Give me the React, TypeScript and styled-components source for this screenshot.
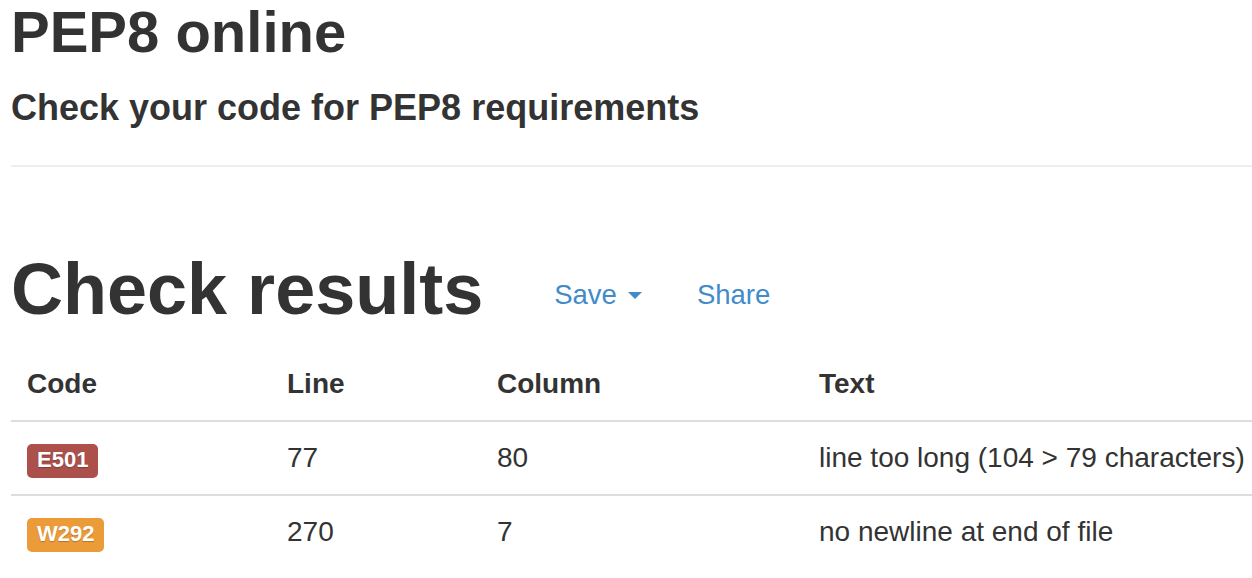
import React from "react";
import styled, { createGlobalStyle } from "styled-components";

const GlobalStyle = createGlobalStyle`
  html, body {
    margin: 0;
    padding: 0;
    background: #fff;
  }
  body {
    font-family: "Liberation Sans", Arial, Helvetica, sans-serif;
    font-size: 28px;
    line-height: 40px;
    color: #333;
  }
`;

const Page = styled.div`
  width: 100%;
  overflow: hidden;
`;

const Content = styled.div`
  width: 1330px;
  padding-left: 11px;
`;

const PageHeader = styled.header`
  padding-bottom: 38px;
  border-bottom: 2px solid #eee;
  margin-bottom: 83px;
`;

const Title = styled.h1`
  margin: 0;
  font-size: 58px;
  line-height: 1.1;
  font-weight: 700;
  color: #333;
`;

const Subtitle = styled.h4`
  margin: 24px 0 0;
  font-size: 36px;
  line-height: 1.1;
  font-weight: 700;
  color: #333;
`;

const ResultsBar = styled.div`
  display: flex;
  align-items: flex-start;
  margin-bottom: 18px;
`;

const ResultsTitle = styled.h1`
  margin: 0;
  font-size: 72px;
  line-height: 1.1;
  font-weight: 700;
  color: #333;
`;

const Actions = styled.nav`
  display: flex;
  align-items: center;
  margin-top: 25px;
  margin-left: 71px;
`;

const ActionLink = styled.a<{ $gap?: number }>`
  display: inline-flex;
  align-items: center;
  color: #428bca;
  text-decoration: none;
  font-size: 27.5px;
  line-height: 40px;
  margin-left: ${(p) => p.$gap ?? 0}px;
  cursor: pointer;
`;

const Caret = styled.span`
  display: inline-block;
  width: 0;
  height: 0;
  margin-left: 11px;
  margin-top: 1px;
  border-top: 7px solid #428bca;
  border-left: 7px solid transparent;
  border-right: 7px solid transparent;
`;

const Table = styled.table`
  width: 100%;
  border-collapse: collapse;
  border-spacing: 0;
`;

const Th = styled.th<{ $w?: number }>`
  text-align: left;
  font-weight: 700;
  padding: 16px;
  line-height: 40px;
  border-bottom: 2px solid #ddd;
  vertical-align: bottom;
  ${(p) => (p.$w ? `width: ${p.$w}px;` : "")}
  box-sizing: border-box;
`;

const Td = styled.td`
  padding: 16px;
  line-height: 40px;
  border-top: 2px solid #ddd;
  vertical-align: top;
  white-space: nowrap;
`;

const Badge = styled.span<{ $tone: "danger" | "warning" }>`
  display: inline-block;
  font-size: 22px;
  font-weight: 700;
  line-height: 1;
  color: #fff;
  padding: 5px 10px 7px;
  border-radius: 5px;
  background: ${(p) => (p.$tone === "danger" ? "#ab504b" : "#ec9b39")};
  text-shadow: 0 1px 1px rgba(0, 0, 0, 0.25);
  white-space: nowrap;
`;

type Row = {
  code: string;
  tone: "danger" | "warning";
  line: number;
  column: number;
  text: string;
};

const rows: Row[] = [
  { code: "E501", tone: "danger", line: 77, column: 80, text: "line too long (104 > 79 characters)" },
  { code: "W292", tone: "warning", line: 270, column: 7, text: "no newline at end of file" },
];

export default function App() {
  return (
    <Page>
      <GlobalStyle />
      <Content>
        <PageHeader>
          <Title>PEP8 online</Title>
          <Subtitle>Check your code for PEP8 requirements</Subtitle>
        </PageHeader>

        <ResultsBar>
          <ResultsTitle>Check results</ResultsTitle>
          <Actions>
            <ActionLink>
              Save
              <Caret />
            </ActionLink>
            <ActionLink $gap={55}>Share</ActionLink>
          </Actions>
        </ResultsBar>

        <Table>
          <thead>
            <tr>
              <Th $w={260}>Code</Th>
              <Th $w={210}>Line</Th>
              <Th $w={322}>Column</Th>
              <Th>Text</Th>
            </tr>
          </thead>
          <tbody>
            {rows.map((r) => (
              <tr key={r.code}>
                <Td>
                  <Badge $tone={r.tone}>{r.code}</Badge>
                </Td>
                <Td>{r.line}</Td>
                <Td>{r.column}</Td>
                <Td>{r.text}</Td>
              </tr>
            ))}
          </tbody>
        </Table>
      </Content>
    </Page>
  );
}
